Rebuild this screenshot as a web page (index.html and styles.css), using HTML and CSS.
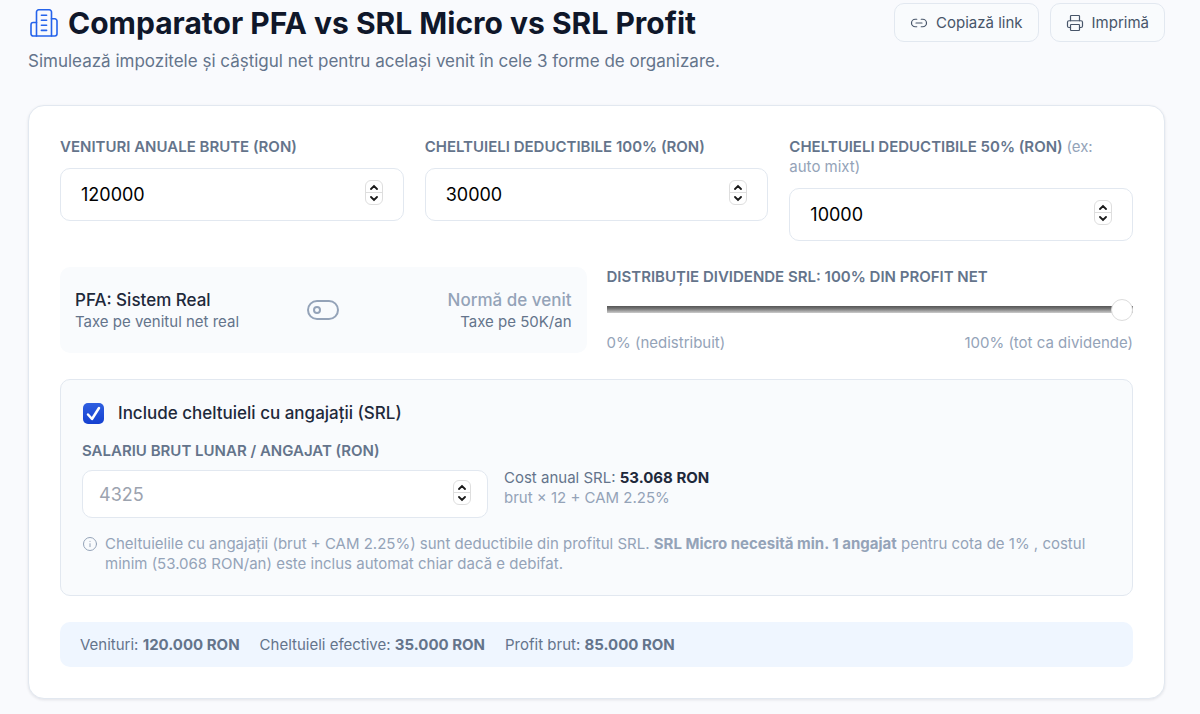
FILE: index.html
```html
<!DOCTYPE html>
<html lang="ro">

<head>
    <title>Comparator PFA vs SRL</title>
    <meta charset="utf-8">
    <meta content="width=device-width, initial-scale=1" name="viewport">
    <link rel="stylesheet" href="styles.css">
</head>

<body>
    <header class="header">
        <div>
            <h1 class="title">
                <svg class="title-icon" viewBox="0 0 28 28" fill="none" stroke="currentColor" stroke-width="1.6" stroke-linecap="round" stroke-linejoin="round">
                    <path d="M6.500 27V3a2.200 2.200 0 0 1 2.200-2.200h10.600a2.200 2.200 0 0 1 2.200 2.200v24" />
                    <path d="M6.500 13.500H3.200A2.200 2.200 0 0 0 1 15.700v9.100a2.200 2.200 0 0 0 2.200 2.200h21.600a2.200 2.200 0 0 0 2.200-2.200V12a2.200 2.200 0 0 0-2.200-2.200h-3.300" />
                    <path d="M11.400 6.200h5.200M11.400 11.200h5.200M11.400 16.300h5.200M11.400 21.400h5.200" />
                </svg>
                Comparator PFA vs SRL Micro vs SRL Profit
            </h1>
            <p class="subtitle">Simulează impozitele și câștigul net pentru același venit în cele 3 forme de organizare.</p>
        </div>
        <div class="actions">
            <button class="button" type="button">
                <svg viewBox="0 0 24 24" fill="none" stroke="currentColor" stroke-width="1.6" stroke-linecap="round" stroke-linejoin="round">
                    <path d="M9 17H7A5 5 0 0 1 7 7h2" />
                    <path d="M15 7h2a5 5 0 1 1 0 10h-2" />
                    <path d="M8 12h8" />
                </svg>
                Copiază link
            </button>
            <button class="button" type="button" id="print">
                <svg viewBox="0 0 24 24" fill="none" stroke="currentColor" stroke-width="1.6" stroke-linecap="round" stroke-linejoin="round">
                    <path d="M6 18H4a2 2 0 0 1-2-2v-5a2 2 0 0 1 2-2h16a2 2 0 0 1 2 2v5a2 2 0 0 1-2 2h-2" />
                    <path d="M6 9V3a1 1 0 0 1 1-1h10a1 1 0 0 1 1 1v6" />
                    <rect x="6" y="14" width="12" height="8" rx="1" />
                </svg>
                Imprimă
            </button>
        </div>
    </header>

    <main class="card">
        <div class="fields">
            <div>
                <label class="label" for="income">VENITURI ANUALE BRUTE (RON)</label>
                <div class="number">
                    <input class="input" id="income" type="number" value="120000">
                    <div class="stepper">
                        <button type="button" data-step="up" aria-label="Mai mult"><svg viewBox="0 0 10 6"><path d="M2 5l3-3 3 3" /></svg></button>
                        <button type="button" data-step="down" aria-label="Mai puțin"><svg viewBox="0 0 10 6"><path d="M2 1l3 3 3-3" /></svg></button>
                    </div>
                </div>
            </div>
            <div>
                <label class="label" for="expenses-full">CHELTUIELI DEDUCTIBILE 100% (RON)</label>
                <div class="number">
                    <input class="input" id="expenses-full" type="number" value="30000">
                    <div class="stepper">
                        <button type="button" data-step="up" aria-label="Mai mult"><svg viewBox="0 0 10 6"><path d="M2 5l3-3 3 3" /></svg></button>
                        <button type="button" data-step="down" aria-label="Mai puțin"><svg viewBox="0 0 10 6"><path d="M2 1l3 3 3-3" /></svg></button>
                    </div>
                </div>
            </div>
            <div>
                <label class="label" for="expenses-half">CHELTUIELI DEDUCTIBILE 50% (RON) <span class="hint">(ex: auto&nbsp;mixt)</span></label>
                <div class="number">
                    <input class="input" id="expenses-half" type="number" value="10000">
                    <div class="stepper">
                        <button type="button" data-step="up" aria-label="Mai mult"><svg viewBox="0 0 10 6"><path d="M2 5l3-3 3 3" /></svg></button>
                        <button type="button" data-step="down" aria-label="Mai puțin"><svg viewBox="0 0 10 6"><path d="M2 1l3 3 3-3" /></svg></button>
                    </div>
                </div>
            </div>
        </div>

        <div class="options">
            <div class="system">
                <div>
                    <p class="system-name">PFA: Sistem Real</p>
                    <p class="system-note">Taxe pe venitul net real</p>
                </div>
                <button class="toggle" type="button" role="switch" aria-checked="false" aria-label="Normă de venit">
                    <svg viewBox="0 0 32 20" fill="none" stroke="currentColor" stroke-width="2">
                        <rect x="1" y="1" width="30" height="18" rx="9" />
                        <circle cx="10" cy="10" r="3" />
                    </svg>
                </button>
                <div class="system-right">
                    <p class="system-name inactive">Normă de venit</p>
                    <p class="system-note">Taxe pe 50K/an</p>
                </div>
            </div>
            <div class="dividends">
                <label class="label" for="dividends">DISTRIBUȚIE DIVIDENDE SRL: <span id="percent">100</span>% DIN PROFIT NET</label>
                <input class="slider" id="dividends" type="range" min="0" max="100" value="100">
                <div class="scale">
                    <span>0% (nedistribuit)</span>
                    <span>100% (tot ca dividende)</span>
                </div>
            </div>
        </div>

        <section class="employees">
            <label class="check">
                <input type="checkbox" checked>
                Include cheltuieli cu angajații (SRL)
            </label>
            <div class="salary">
                <div>
                    <label class="label" for="salary">SALARIU BRUT LUNAR / ANGAJAT (RON)</label>
                    <div class="number">
                        <input class="input" id="salary" type="number" placeholder="4325">
                        <div class="stepper">
                            <button type="button" data-step="up" aria-label="Mai mult"><svg viewBox="0 0 10 6"><path d="M2 5l3-3 3 3" /></svg></button>
                            <button type="button" data-step="down" aria-label="Mai puțin"><svg viewBox="0 0 10 6"><path d="M2 1l3 3 3-3" /></svg></button>
                        </div>
                    </div>
                </div>
                <div class="cost">
                    <p>Cost anual SRL: <strong>53.068 RON</strong></p>
                    <p class="hint">brut × 12 + CAM 2.25%</p>
                </div>
            </div>
            <div class="info">
                <svg viewBox="0 0 16 16" fill="none" stroke="currentColor" stroke-linecap="round">
                    <circle cx="8" cy="8" r="6.500" />
                    <path d="M8 7.700v3M8 5.300v.1" />
                </svg>
                <p>Cheltuielile cu angajații (brut + CAM 2.25%) sunt deductibile din profitul SRL. <strong>SRL Micro necesită min. 1 angajat</strong> pentru cota de 1% , costul minim (53.068 RON/an) este inclus automat chiar dacă e debifat.</p>
            </div>
        </section>

        <div class="summary">
            <span>Venituri: <strong>120.000 RON</strong></span>
            <span>Cheltuieli efective: <strong>35.000 RON</strong></span>
            <span>Profit brut: <strong>85.000 RON</strong></span>
        </div>
    </main>

    <script src="script.js"></script>
</body>

</html>
```

FILE: styles.css
```css
* {
    box-sizing: border-box;
    margin: 0;
    padding: 0;
}

body {
    background: #f9fafd;
    color: #64748b;
    font-family: Inter, 'Liberation Sans', sans-serif;
    font-size: 15px;
    line-height: 20px;
    padding: 3px 35px 14px 28px;
}

button,
input {
    font-family: inherit;
}

.header {
    align-items: flex-start;
    display: flex;
    justify-content: space-between;
    margin-bottom: 30px;
}

.title {
    align-items: center;
    color: #0f172a;
    display: flex;
    font-size: 30px;
    font-weight: 700;
    gap: 10px;
    line-height: 40px;
}

.title-icon {
    color: #2563eb;
    height: 28px;
    margin-left: 2px;
    width: 28px;
}

.subtitle {
    font-size: 17px;
    line-height: 28px;
    margin-top: 4px;
}

.actions {
    display: flex;
    gap: 11px;
}

.button {
    align-items: center;
    background: #f9fbfd;
    border: 1px solid #e2e8f0;
    border-radius: 10px;
    color: #475569;
    display: flex;
    font-size: 15px;
    gap: 8px;
    height: 39px;
    padding: 0 15px;
    white-space: nowrap;
}

.button svg {
    height: 18px;
    width: 18px;
}

.card {
    background: white;
    border: 1px solid #e2e8f0;
    border-radius: 16px;
    box-shadow: 0 1px 3px rgba(15, 23, 42, 0.1);
    display: flex;
    flex-direction: column;
    gap: 26px;
    padding: 31px;
}

.fields {
    align-items: start;
    display: grid;
    gap: 21px;
    grid-template-columns: repeat(3, 1fr);
}

.label {
    color: #64748b;
    display: block;
    font-weight: 600;
}

.hint {
    color: #94a3b8;
    font-weight: 400;
}

.number {
    margin-top: 11px;
    position: relative;
}

.input {
    appearance: textfield;
    background: white;
    border: 1px solid #e2e8f0;
    border-radius: 10px;
    color: black;
    display: block;
    font-size: 18px;
    height: 53px;
    padding: 0 48px 0 20px;
    width: 100%;
}

.input::-webkit-inner-spin-button {
    appearance: none;
}

.input::placeholder {
    color: #9ca3af;
}

/* sits over the right end of the number box */
.stepper {
    background: white;
    border: 1px solid #dedede;
    border-radius: 6px;
    display: flex;
    flex-direction: column;
    height: 25px;
    position: absolute;
    right: 21px;
    top: 12px;
    width: 18px;
}

.stepper button {
    align-items: center;
    background: none;
    border: none;
    display: flex;
    flex: 1;
    justify-content: center;
}

.stepper button + button {
    border-top: 1px solid #dedede;
}

.stepper svg {
    fill: none;
    height: 6px;
    stroke: #1a1a1a;
    stroke-linecap: round;
    stroke-width: 1.8;
    width: 10px;
}

.options {
    display: grid;
    gap: 20px;
    grid-template-columns: 1fr 1fr;
}

.system {
    align-items: center;
    background: #f9fbfd;
    border-radius: 10px;
    display: grid;
    grid-template-columns: 1fr auto 1fr;
    padding: 15px;
}

.system-name {
    color: #1e293b;
    font-size: 17px;
    font-weight: 500;
    line-height: 24px;
}

.system-name.inactive {
    color: #94a3b8;
}

.system-right {
    text-align: right;
}

.toggle {
    background: none;
    border: none;
    color: #94a3b8;
}

.toggle svg {
    display: block;
    height: 20px;
    width: 32px;
}

.slider {
    appearance: none;
    background: none;
    display: block;
    height: 22px;
    margin: 11px 0 13px;
    width: 100%;
}

.slider::-webkit-slider-runnable-track {
    background: linear-gradient(#555, #777 40%, #ccc);
    height: 7px;
}

.slider::-webkit-slider-thumb {
    appearance: none;
    background: white;
    border: 1px solid #dcdcdc;
    border-radius: 50%;
    height: 22px;
    margin-top: -7px;
    width: 22px;
}

.scale {
    color: #94a3b8;
    display: flex;
    justify-content: space-between;
}

.employees {
    background: #f9fbfd;
    border: 1px solid #e2e8f0;
    border-radius: 10px;
    display: flex;
    flex-direction: column;
    gap: 16px;
    padding: 21px;
}

.check {
    align-items: center;
    color: #1e293b;
    display: flex;
    font-size: 17px;
    font-weight: 500;
    gap: 14px;
    line-height: 24px;
}

.check input {
    appearance: none;
    background: #1d4ed8;
    border-radius: 5px;
    height: 21px;
    margin-left: 1px;
    width: 21px;
}

.check input:checked {
    background: url("data:image/svg+xml,%3Csvg xmlns='http://www.w3.org/2000/svg' viewBox='0 0 21 21'%3E%3Cpath d='M5 11.500l4 4.500 7-11' fill='none' stroke='white' stroke-width='2.500' stroke-linecap='round' stroke-linejoin='round'/%3E%3C/svg%3E"), linear-gradient(#2f5fe0, #1440d0);
}

.salary {
    align-items: flex-end;
    display: grid;
    gap: 16px;
    grid-template-columns: 406px 1fr;
}

.salary .number {
    margin-top: 9px;
}

.salary .input {
    font-size: 18px;
    height: 48px;
    padding-left: 16px;
}

.salary .stepper {
    right: 17px;
    top: 10px;
}

.cost {
    padding-bottom: 10px;
}

.cost strong {
    color: #1e293b;
}

.info {
    color: #94a3b8;
    display: flex;
    gap: 7px;
}

.info svg {
    flex: none;
    height: 16px;
    margin-top: 2px;
    width: 16px;
}

.summary {
    background: #eff6ff;
    border-radius: 10px;
    display: flex;
    flex-wrap: wrap;
    gap: 20px;
    line-height: 21px;
    padding: 12px 20px;
}
```

FILE: script.js
```js
document.querySelectorAll('.stepper button').forEach(button => {
    const input = button.closest('.number').querySelector('input');
    button.addEventListener('click', () => {
        if (button.dataset.step === 'up') {
            input.stepUp();
        } else {
            input.stepDown();
        }
    });
});

const slider = document.getElementById('dividends');
slider.addEventListener('input', () => {
    document.getElementById('percent').textContent = slider.value;
});

document.getElementById('print').addEventListener('click', () => window.print());
```
